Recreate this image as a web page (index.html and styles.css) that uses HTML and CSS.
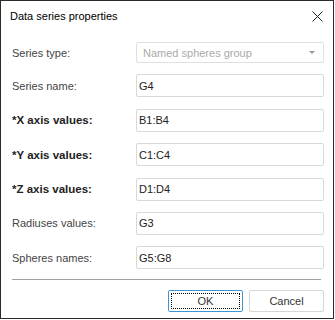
FILE: index.html
```html
<!DOCTYPE html>
<html>
<head>
    <title>Data series properties</title>
    <link rel="stylesheet" href="styles.css">
</head>
<body>
    <div class="dialog">
        <div class="titlebar">
            <span class="title">Data series properties</span>
            <svg class="close" width="11" height="11" viewBox="0 0 11 11">
                <path d="M0.5 0.5 L10.5 10.5 M10.5 0.5 L0.5 10.5" stroke="#222" stroke-width="1" fill="none"/>
            </svg>
        </div>
        <form class="form">
            <label>Series type:</label>
            <div class="combo">
                <span>Named spheres group</span>
                <span class="arrow"></span>
            </div>

            <label for="name">Series name:</label>
            <input type="text" id="name" value="G4">

            <label for="xval" class="required">*X axis values:</label>
            <input type="text" id="xval" value="B1:B4">

            <label for="yval" class="required">*Y axis values:</label>
            <input type="text" id="yval" value="C1:C4">

            <label for="zval" class="required">*Z axis values:</label>
            <input type="text" id="zval" value="D1:D4">

            <label for="radius">Radiuses values:</label>
            <input type="text" id="radius" value="G3">

            <label for="spheres">Spheres names:</label>
            <input type="text" id="spheres" value="G5:G8">
        </form>
        <div class="separator"></div>
        <div class="buttons">
            <button type="button" class="default"><span class="focus">OK</span></button>
            <button type="button">Cancel</button>
        </div>
    </div>
</body>
</html>
```
FILE: styles.css
```css
body {
    margin: 0;
    padding: 0;
    background-color: #fff;
    font-family: "Liberation Sans", Arial, sans-serif;
    font-size: 11px;
    color: #333;
}

.dialog {
    width: 334px;
    height: 319px;
    border: 1px solid #2b2b2b;
    box-sizing: border-box;
    background-color: #fff;
    display: flex;
    flex-direction: column;
}

.titlebar {
    height: 30px;
    padding: 0 10px 0 9px;
    display: flex;
    align-items: center;
    justify-content: space-between;
}

.title {
    font-size: 11px;
    color: #000;
}

.form {
    margin: 0;
    padding: 11px 9px 0 11px;
    display: grid;
    grid-template-columns: 124px 1fr;
    row-gap: 11.4px;
    align-items: center;
}

.form label {
    color: #444;
}

.form label.required {
    font-weight: bold;
    font-size: 11.5px;
    color: #222;
}

.form input {
    height: 23px;
    box-sizing: border-box;
    border: 1px solid #d9d9d9;
    border-radius: 2px;
    padding: 0 2px;
    font-family: "Liberation Sans", Arial, sans-serif;
    font-size: 11px;
    color: #222;
    outline: none;
}

.combo {
    height: 21px;
    box-sizing: border-box;
    border: 1px solid #e0e0e0;
    border-radius: 2px;
    padding: 0 8px 0 6px;
    display: flex;
    align-items: center;
    justify-content: space-between;
    color: #aaa;
}

.arrow {
    width: 0;
    height: 0;
    border-left: 3px solid transparent;
    border-right: 3px solid transparent;
    border-top: 3px solid #999;
}

.separator {
    height: 1px;
    margin: 10px 12px 0 11px;
    background-color: #a0a0a0;
}

.buttons {
    display: flex;
    justify-content: flex-end;
    gap: 6px;
    padding: 10px 9px 0 0;
}

.buttons button {
    width: 75px;
    height: 22px;
    box-sizing: border-box;
    border: 1px solid #d6d6d6;
    border-radius: 2px;
    background-color: #fff;
    font-family: "Liberation Sans", Arial, sans-serif;
    font-size: 11px;
    color: #333;
    padding: 0;
}

.buttons button.default {
    border-color: #3c96d6;
    padding: 2px;
}

.focus {
    display: flex;
    align-items: center;
    justify-content: center;
    height: 100%;
    border: 1px dotted #000;
    box-sizing: border-box;
}
```
